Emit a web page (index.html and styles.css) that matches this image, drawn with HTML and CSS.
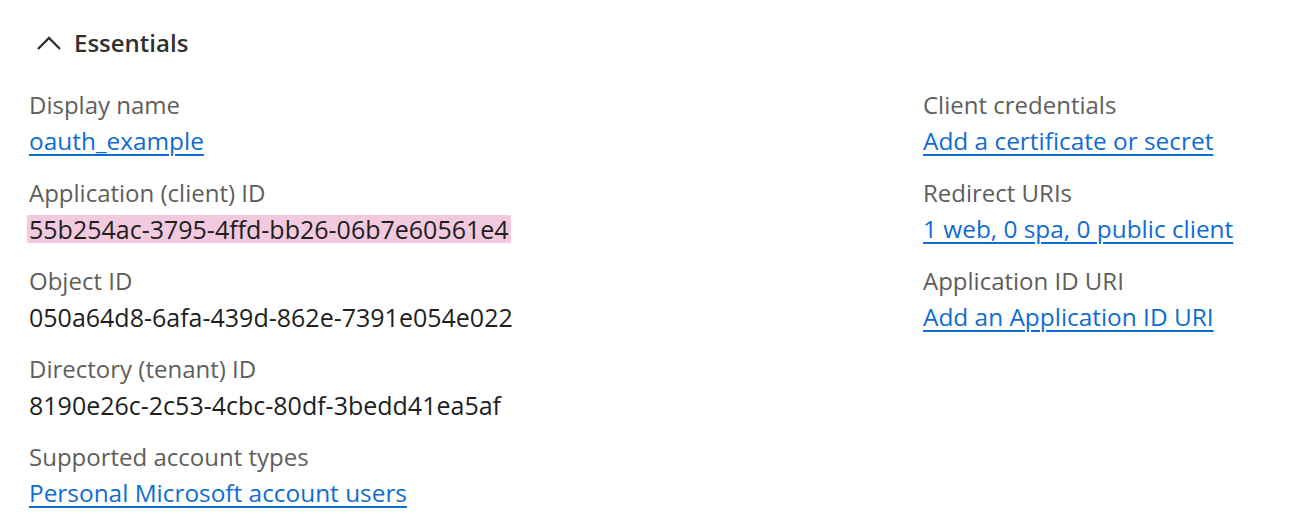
FILE: index.html
```html
<!DOCTYPE html>
<html>
<head>
<meta charset="utf-8">
<link rel="stylesheet" href="styles.css">
</head>
<body>
<section class="essentials">
  <header class="ess-head">
    <svg class="chev" width="26" height="18" viewBox="0 0 26 18"><path d="M2 16 L13 5 L24 16" fill="none" stroke="#323130" stroke-width="2.4"/></svg>
    <span class="ess-title">Essentials</span>
  </header>
  <div class="ess-grid">
    <div class="col">
      <div class="item"><div class="label">Display name</div><div class="value"><a href="#">oauth_example</a></div></div>
      <div class="item"><div class="label">Application (client) ID</div><div class="value id"><span class="hl">55b254ac-3795-4ffd-bb26-06b7e60561e4</span></div></div>
      <div class="item"><div class="label">Object ID</div><div class="value id">050a64d8-6afa-439d-862e-7391e054e022</div></div>
      <div class="item"><div class="label">Directory (tenant) ID</div><div class="value id">8190e26c-2c53-4cbc-80df-3bedd41ea5af</div></div>
      <div class="item"><div class="label">Supported account types</div><div class="value"><a href="#">Personal Microsoft account users</a></div></div>
    </div>
    <div class="col">
      <div class="item"><div class="label">Client credentials</div><div class="value"><a href="#">Add a certificate or secret</a></div></div>
      <div class="item"><div class="label">Redirect URIs</div><div class="value"><a href="#">1 web, 0 spa, 0 public client</a></div></div>
      <div class="item"><div class="label">Application ID URI</div><div class="value"><a href="#">Add an Application ID URI</a></div></div>
    </div>
  </div>
</section>
</body>
</html>
```
FILE: styles.css
```css
html, body { margin: 0; padding: 0; background: #fff; }
body { font-family: "Open Sans", "Noto Sans", sans-serif; color: #323130; }
.essentials { padding: 22px 0 0 29px; }
.ess-head { display: flex; align-items: center; gap: 12px; height: 40px; padding-left: 7px; }
.chev { display: block; }
.ess-title { font-size: 24px; font-weight: 600; color: #323130; }
.ess-grid { display: grid; grid-template-columns: 894px 1fr; margin-top: 25px; }
.col { display: flex; flex-direction: column; gap: 16px; }
.item { display: flex; flex-direction: column; }
.label, .value { font-size: 24px; line-height: 36px; height: 36px; white-space: nowrap; }
.label { color: #605e5c; }
.value { color: #201f1e; font-size: 24.4px; }
.value.id { font-size: 25px; }
.value a { color: #0f6cd4; text-decoration: underline; text-decoration-thickness: 2px; text-underline-offset: 4px; }
.hl { display: inline-block; background: #f3c9df; line-height: 28px; margin-left: -2px; padding: 0 2px; }
```
